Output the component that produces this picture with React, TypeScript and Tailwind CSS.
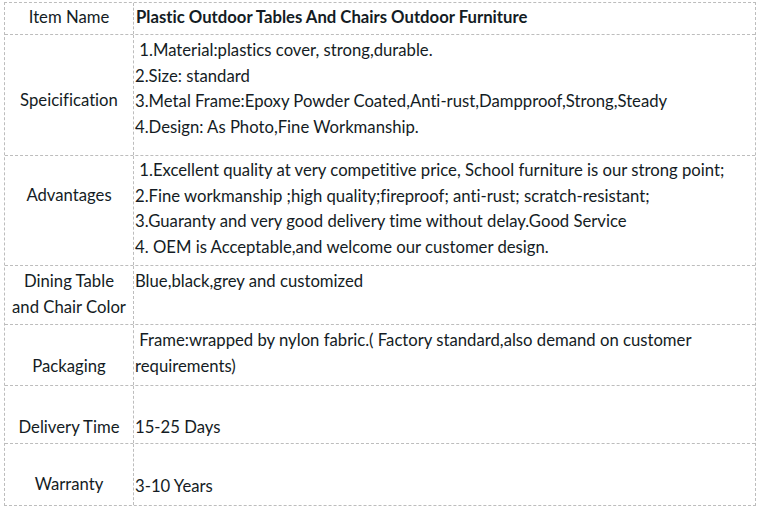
import React from "react";

const rows = [
  { h: "h-[121px]", label: ["Speicification"], labelPt: "pt-[53px]", pt: "pt-[3px]",
    lines: [" 1.Material:plastics cover, strong,durable.", "2.Size: standard", "3.Metal Frame:Epoxy Powder Coated,Anti-rust,Dampproof,Strong,Steady", "4.Design: As Photo,Fine Workmanship."] },
  { h: "h-[110px]", label: ["Advantages"], labelPt: "pt-[27px]", pt: "pt-[2px]",
    lines: [" 1.Excellent quality at very competitive price, School furniture is our strong point;", "2.Fine workmanship ;high quality;fireproof; anti-rust; scratch-resistant;", "3.Guaranty and very good delivery time without delay.Good Service", "4. OEM is Acceptable,and welcome our customer design."] },
  { h: "h-[59px]", label: ["Dining Table", "and Chair Color"], labelPt: "pt-[3px]", pt: "pt-[3px]",
    lines: ["Blue,black,grey and customized"] },
  { h: "h-[61px]", label: ["Packaging"], labelPt: "pt-[29px]", pt: "pt-[3px]",
    lines: [" Frame:wrapped by nylon fabric.( Factory standard,also demand on customer", "requirements)"] },
  { h: "h-[58px]", label: ["Delivery Time"], labelPt: "pt-[29px]", pt: "pt-[29px]",
    lines: ["15-25 Days"] },
  { h: "h-[61px]", label: ["Warranty"], labelPt: "pt-[28px]", pt: "pt-[30px]",
    lines: ["3-10 Years"] },
];

export default function App() {
  return (
    <div className="w-[760px] h-[510px] bg-white pt-[2px] pl-[4px] text-[16.7px] leading-[25.5px] text-[#141c24] [font-variant-ligatures:none]" style={{ fontFamily: "Lato, 'Open Sans', sans-serif" }}>
      <div className="w-[752px] border border-dashed border-[#bdbdbd]">
        <div className="flex h-[32px] border-b border-dashed border-[#bdbdbd]">
          <div className="w-[129px] border-r border-dashed border-[#bdbdbd] text-center pt-[2px]">Item Name</div>
          <div className="flex-1 pl-[2px] pt-[2px] font-bold">Plastic Outdoor Tables And Chairs Outdoor Furniture</div>
        </div>
        {rows.map((r, i) => (
          <div key={i} className={`flex ${r.h} ${i < rows.length - 1 ? "border-b border-dashed border-[#bdbdbd]" : ""}`}>
            <div className={`w-[129px] border-r border-dashed border-[#bdbdbd] text-center ${r.labelPt}`}>
              {r.label.map((l, j) => <div key={j}>{l}</div>)}
            </div>
            <div className={`flex-1 pl-[1px] whitespace-pre ${r.pt}`}>
              {r.lines.map((l, j) => <div key={j}>{l}</div>)}
            </div>
          </div>
        ))}
      </div>
    </div>
  );
}
